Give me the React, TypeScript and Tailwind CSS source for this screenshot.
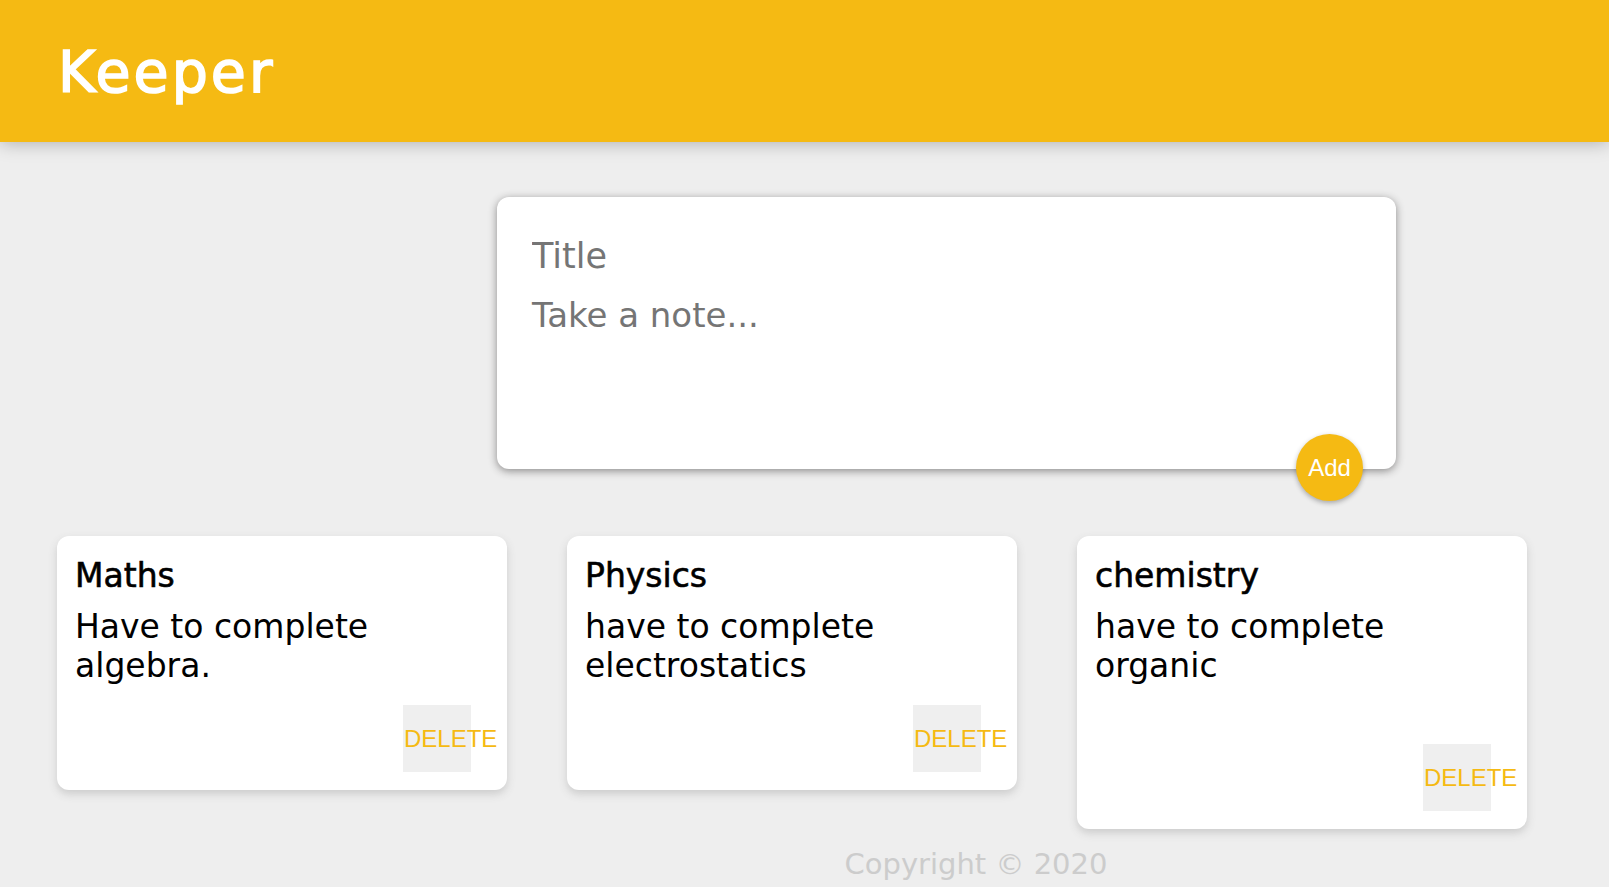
import React, { useState } from "react";

type Note = {
  id: number;
  title: string;
  content: string;
};

const startNotes: Note[] = [
  { id: 1, title: "Maths", content: "Have to complete algebra." },
  { id: 2, title: "Physics", content: "have to complete electrostatics" },
  { id: 3, title: "chemistry", content: "have to complete organic\n\u00a0" },
];

const Header = () => {
  return (
    <header className="relative z-10 h-[142px] bg-[#f5ba13] pl-[58px] pt-[40px] shadow-[0_0_18px_0_rgba(0,0,0,0.3)]">
      <h1 className="font-['DejaVu_Sans',sans-serif] text-[57px] font-normal leading-[64px] tracking-[3px] text-white [-webkit-text-stroke:1.6px_white]">
        Keeper
      </h1>
    </header>
  );
};

const NoteCard = ({ note, onDelete }: { note: Note; onDelete: (id: number) => void }) => {
  return (
    <div className="w-[450px] rounded-[12px] bg-white px-[18px] pt-[20px] pb-[18px] shadow-[0_4px_9px_#cccccc]">
      <h1 className="mb-[11px] text-[33px] leading-[40px] text-black [-webkit-text-stroke:0.6px_black]">
        {note.title}
      </h1>
      <p className="mb-[20px] whitespace-pre-wrap break-words pr-[16px] text-[33px] leading-[39px] text-black">
        {note.content}
      </p>
      <div className="flex justify-end pr-[18px]">
        <button
          onClick={() => onDelete(note.id)}
          className="relative h-[67px] w-[68px] bg-[#efefef] p-0"
        >
          <span className="absolute left-[1px] top-1/2 -translate-y-1/2 whitespace-nowrap font-['Liberation_Sans',Arial,sans-serif] text-[24px] leading-[28px] text-[#f5ba13]">
            DELETE
          </span>
        </button>
      </div>
    </div>
  );
};

const CreateArea = ({ onAdd }: { onAdd: (title: string, content: string) => void }) => {
  const [title, setTitle] = useState("");
  const [content, setContent] = useState("");

  const submit = (e: React.FormEvent) => {
    e.preventDefault();
    if (!title && !content) return;
    onAdd(title, content);
    setTitle("");
    setContent("");
  };

  return (
    <form
      onSubmit={submit}
      className="relative ml-[497px] mt-[55px] h-[272px] w-[899px] rounded-[12px] bg-white px-[27px] pt-[27px] shadow-[0_2px_9px_rgb(138,137,137)]"
    >
      <input
        value={title}
        onChange={e => setTitle(e.target.value)}
        placeholder="Title"
        className="block h-[64px] w-full pl-[8px] pr-[7px] text-[35px] text-black outline-none placeholder:text-[#757575]"
      />
      <textarea
        value={content}
        onChange={e => setContent(e.target.value)}
        placeholder="Take a note..."
        rows={3}
        className="block h-[154px] w-full resize-none pl-[8px] pr-[7px] py-[7px] text-[34px] leading-[41px] text-black outline-none placeholder:text-[#757575]"
      />
      <button
        type="submit"
        className="absolute bottom-[-32px] right-[33px] h-[67px] w-[67px] rounded-full bg-[#f5ba13] font-['Liberation_Sans',Arial,sans-serif] text-[24px] text-white shadow-[0_2px_5px_rgba(0,0,0,0.3)]"
      >
        Add
      </button>
    </form>
  );
};

const App = () => {
  const [notes, setNotes] = useState<Note[]>(startNotes);

  const addNote = (title: string, content: string) => {
    setNotes(prev => [...prev, { id: Date.now(), title, content }]);
  };

  const deleteNote = (id: number) => {
    setNotes(prev => prev.filter(n => n.id !== id));
  };

  return (
    <div className="min-h-screen overflow-hidden bg-[#eeeeee] font-['DejaVu_Sans',sans-serif]">
      <Header />
      <CreateArea onAdd={addNote} />

      <div className="mt-[67px] flex items-start gap-[60px] pl-[57px]">
        {notes.map(note => (
          <NoteCard key={note.id} note={note} onDelete={deleteNote} />
        ))}
      </div>

      {/* footer sits under the middle of a wider page, so it is pushed right */}
      <footer className="mt-[17px] pl-[343px] text-center">
        <p className="whitespace-nowrap text-[29px] leading-[36px] text-[#cccccc]">Copyright © 2020</p>
      </footer>
    </div>
  );
};

export default App;
